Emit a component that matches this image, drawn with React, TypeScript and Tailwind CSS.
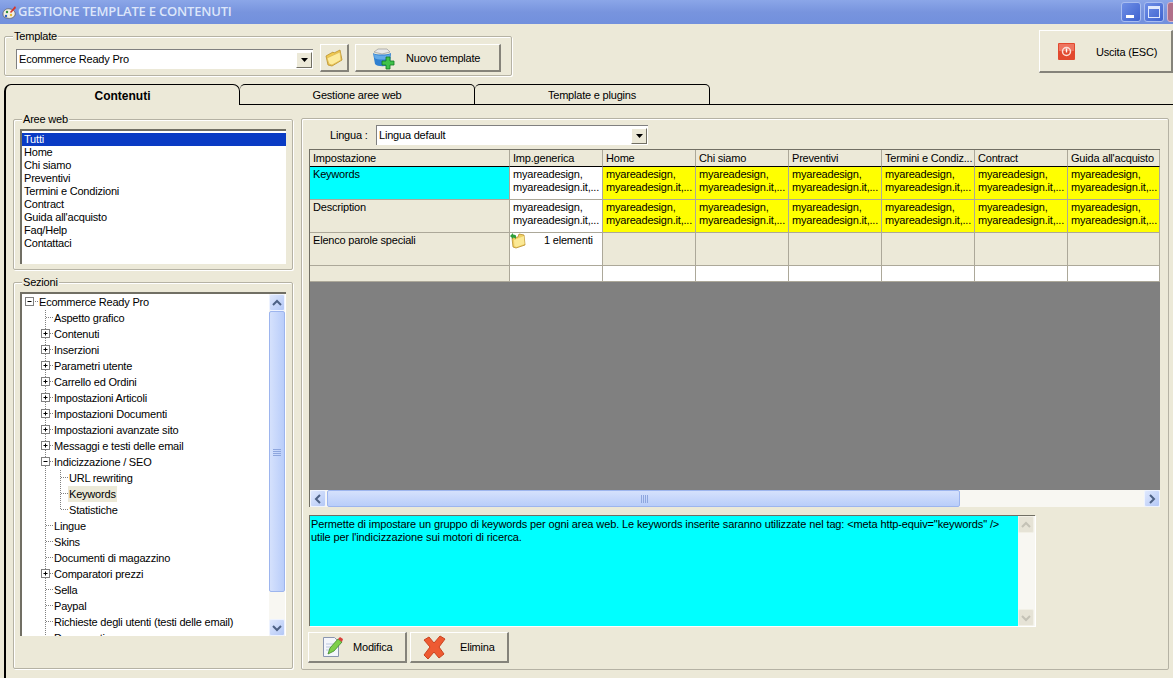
import type { ReactNode } from 'react';

const FONT = "font-['Liberation_Sans',Arial,sans-serif]";

const areas = ['Tutti', 'Home', 'Chi siamo', 'Preventivi', 'Termini e Condizioni', 'Contract', "Guida all'acquisto", 'Faq/Help', 'Contattaci'];

type Node = { label: string; level: number; kind?: 'plus' | 'minus'; last?: boolean; selected?: boolean };

const tree: Node[] = [
    { label: 'Ecommerce Ready Pro', level: 0, kind: 'minus' },
    { label: 'Aspetto grafico', level: 1 },
    { label: 'Contenuti', level: 1, kind: 'plus' },
    { label: 'Inserzioni', level: 1, kind: 'plus' },
    { label: 'Parametri utente', level: 1, kind: 'plus' },
    { label: 'Carrello ed Ordini', level: 1, kind: 'plus' },
    { label: 'Impostazioni Articoli', level: 1, kind: 'plus' },
    { label: 'Impostazioni Documenti', level: 1, kind: 'plus' },
    { label: 'Impostazioni avanzate sito', level: 1, kind: 'plus' },
    { label: 'Messaggi e testi delle email', level: 1, kind: 'plus' },
    { label: 'Indicizzazione / SEO', level: 1, kind: 'minus' },
    { label: 'URL rewriting', level: 2 },
    { label: 'Keywords', level: 2, selected: true },
    { label: 'Statistiche', level: 2, last: true },
    { label: 'Lingue', level: 1 },
    { label: 'Skins', level: 1 },
    { label: 'Documenti di magazzino', level: 1 },
    { label: 'Comparatori prezzi', level: 1, kind: 'plus' },
    { label: 'Sella', level: 1 },
    { label: 'Paypal', level: 1 },
    { label: 'Richieste degli utenti (testi delle email)', level: 1 },
    { label: 'Documenti', level: 1 },
];

const columns = ['Imp.generica', 'Home', 'Chi siamo', 'Preventivi', 'Termini e Condiz...', 'Contract', "Guida all'acquisto"];

const Expander = ({ x, kind }: { x: number; kind: 'plus' | 'minus' }) => (
    <>
        <rect x={x - 4} y="3.5" width="8" height="8" fill="#fff" stroke="#808080" />
        <path d={`M${x - 2} 7.5h4`} stroke="#000" />
        {kind === 'plus' && <path d={`M${x} 5.5v4`} stroke="#000" />}
    </>
);

const TreeRow = ({ node }: { node: Node }) => {
    const width = node.level === 0 ? 17 : node.level === 1 ? 32 : 46;
    return (
        <div className="flex h-4 items-center">
            <svg width={width} height="16" className="shrink-0">
                {node.level > 0 && <path d="M23.5 0v16" stroke="#808080" strokeDasharray="1 1" />}
                {node.level === 2 && <path d={node.last ? 'M38.5 0v8' : 'M38.5 0v16'} stroke="#808080" strokeDasharray="1 1" />}
                {node.level === 0 && <path d="M7 7.5h10" stroke="#808080" strokeDasharray="1 1" />}
                {node.level === 1 && <path d="M24 7.5h8" stroke="#808080" strokeDasharray="1 1" />}
                {node.level === 2 && <path d="M39 7.5h7" stroke="#808080" strokeDasharray="1 1" />}
                {node.kind && <Expander x={node.level === 0 ? 7.5 : 23.5} kind={node.kind} />}
            </svg>
            <span className={`whitespace-nowrap ${node.level === 2 ? 'px-px' : ''} ${node.selected ? 'bg-[#ece9d8]' : ''}`}>{node.label}</span>
        </div>
    );
};

const Group = ({ title, className, children }: { title: string; className: string; children: ReactNode }) => (
    <div className={`relative rounded-[2px] border border-[#b5b2a4] shadow-[inset_1px_1px_0_#fff,1px_1px_0_#fff] ${className}`}>
        <span className="absolute -top-[7px] left-2 bg-[#ece9d8] px-px leading-3">{title}</span>
        {children}
    </div>
);

const Button = ({ className, children }: { className: string; children: ReactNode }) => (
    <div className={`flex items-center border-t border-l border-white border-b-2 border-r-2 border-b-[#85837a] border-r-[#85837a] bg-[#ece9d8] ${className}`}>
        {children}
    </div>
);

const ComboArrow = () => (
    <div className="flex h-4 w-4 items-center justify-center border-t border-l border-white border-r border-b border-r-[#716f64] border-b-[#716f64] bg-[#ece9d8]">
        <svg width="7" height="4"><path d="M0 0h7L3.5 4z" fill="#000" /></svg>
    </div>
);

const Arrow = ({ dir, color }: { dir: 'up' | 'down' | 'left' | 'right'; color: string }) => {
    const d = { up: 'M1 6l4-4 4 4', down: 'M1 2l4 4 4-4', left: 'M6 1L2 5l4 4', right: 'M2 1l4 4-4 4' }[dir];
    const box = dir === 'up' || dir === 'down' ? '0 0 10 8' : '0 0 8 10';
    return (
        <svg width={dir === 'up' || dir === 'down' ? 10 : 8} height={dir === 'up' || dir === 'down' ? 8 : 10} viewBox={box}>
            <path d={d} fill="none" stroke={color} strokeWidth="2" />
        </svg>
    );
};

const ScrollButton = ({ dir }: { dir: 'up' | 'down' | 'left' | 'right' }) => (
    <div className="flex h-[17px] w-4 shrink-0 items-center justify-center rounded-[2px] border border-[#eef3ff] bg-gradient-to-br from-[#dfe8fd] to-[#b4c8f6]">
        <Arrow dir={dir} color="#4d6185" />
    </div>
);

const DisabledButton = ({ dir }: { dir: 'up' | 'down' }) => (
    <div className="flex h-[17px] w-4 shrink-0 items-center justify-center rounded-[2px] border border-[#f2f0e6] bg-[#e6e3d6]">
        <Arrow dir={dir} color="#c4c2b6" />
    </div>
);

const Grip = ({ vertical }: { vertical?: boolean }) => (
    <svg width="8" height="8">
        {vertical
            ? <path d="M0 1.5h8M0 3.5h8M0 5.5h8M0 7.5h8" stroke="#8ea6de" />
            : <path d="M1.5 0v8M3.5 0v8M5.5 0v8M7.5 0v8" stroke="#8ea6de" />}
    </svg>
);

const FolderIcon = () => (
    <svg width="18" height="18" viewBox="0 0 18 18">
        <path d="M1 7l7-4 1 1 6-3 2 10-10 6-4-1z" fill="#f0c94f" stroke="#b98f2c" strokeWidth=".8" />
        <path d="M2 9l13-6 1 8-9 5-3-1z" fill="#fdeb9c" stroke="#d6b04a" strokeWidth=".6" />
    </svg>
);

const NewIcon = () => (
    <svg width="24" height="24" viewBox="0 0 24 24">
        <path d="M3 6l4-3h9l3 3-8 2z" fill="#e8e8e8" stroke="#9a9a9a" strokeWidth=".7" />
        <path d="M2 7c3 2 14 2 18 0l-1 11c-2 3-13 3-15 0z" fill="#2f7fd0" />
        <path d="M3 8c3 2 13 2 16 0l-.5 4c-3 2-12 2-15 0z" fill="#63aae8" />
        <path d="M15 11h4v4h4v4h-4v4h-4v-4h-4v-4h4z" fill="#3fc24a" stroke="#137a25" strokeWidth=".8" />
    </svg>
);

const PowerIcon = () => (
    <svg width="17" height="17" viewBox="0 0 17 17">
        <rect width="17" height="17" rx="1" fill="#e2492e" />
        <rect x="1" y="1" width="15" height="7" fill="#ee7560" />
        <circle cx="8.5" cy="8.5" r="4" fill="none" stroke="#fbe0d8" strokeWidth="1.5" />
        <path d="M8.5 5.5v4" stroke="#fff" strokeWidth="1.4" />
    </svg>
);

const EditIcon = () => (
    <svg width="22" height="24" viewBox="0 0 22 24">
        <path d="M1.5 2.5h11l4 4v15h-15z" fill="#f4f6fb" stroke="#8a96b0" />
        <path d="M4 9h9M4 12h6M4 15h5" stroke="#b9c6de" />
        <path d="M6 19l2-6 8-9 4 3-8 9z" fill="#7ed04b" stroke="#3f8a2a" strokeWidth=".8" />
        <path d="M16 4l2-2 3 2-1 3z" fill="#d9403a" />
    </svg>
);

const DeleteIcon = () => (
    <svg width="24" height="24" viewBox="0 0 24 24">
        <path d="M2 5l5-3 5 6 6-7 5 3-6 8 5 7-5 4-5-6-6 7-4-4 6-8z" fill="#ee5a32" stroke="#c9431f" />
    </svg>
);

const AppIcon = () => (
    <svg width="15" height="15" viewBox="0 0 15 15">
        <path d="M1 9c0-4 4-6 7-5 3 0 6 3 5 6-1 3-5 4-8 3-3 0-4-2-4-4z" fill="#f2efe2" stroke="#555" strokeWidth=".7" />
        <path d="M8 7l5-6 1 2-5 5z" fill="#d6362b" />
        <circle cx="5" cy="7" r="1.2" fill="#2f8f3a" />
        <circle cx="9" cy="10" r="1.2" fill="#e8b92e" />
        <circle cx="4" cy="11" r="1.2" fill="#2d5fc4" />
    </svg>
);

const LinkFolderIcon = () => (
    <svg width="16" height="16" viewBox="0 0 16 16" className="shrink-0">
        <path d="M2 5l6-1 1-3 5 1 1 10-9 3-3-1z" fill="#f0cf62" stroke="#b98f2c" strokeWidth=".8" />
        <path d="M4 7l10-4 .5 8-8 3-2-1z" fill="#fbe996" />
        <path d="M3 0L0 3l3 3V4.5c2 0 3 1 3 2.5V2.5C5 2 4 1.5 3 1.5z" fill="#2f9e3a" />
    </svg>
);

const Cell = ({ bg, children, className = '' }: { bg: string; children?: ReactNode; className?: string }) => (
    <div className={`overflow-hidden border-r border-b border-[#aca899] pl-[3px] leading-[13px] ${bg} ${className}`}>{children}</div>
);

const Keywords = ({ bg }: { bg: string }) => (
    <Cell bg={bg} className="pt-px whitespace-nowrap">myareadesign,<br />myareadesign.it,...</Cell>
);

export default function App() {
    return (
        <div className={`flex h-[678px] w-[1173px] flex-col overflow-hidden bg-[#ece9d8] text-[11px] tracking-[-0.2px] text-black ${FONT}`}>
            {/* Title bar */}
            <div className="flex h-6 shrink-0 items-center bg-gradient-to-b from-[#8ba6e8] via-[#7894de] to-[#7290dd] pl-[2px]">
                <AppIcon />
                <span className="ml-[1px] font-['Open_Sans',sans-serif] text-[13px] font-semibold text-[#dce6fa]">GESTIONE TEMPLATE E CONTENUTI</span>
                <div className="ml-auto flex translate-x-[14px] gap-[3px]">
                    <div className="flex h-5 w-5 items-end rounded-[3px] border border-[#a8bdf0] bg-gradient-to-br from-[#6f8fe6] to-[#3f62cf] pb-[3px] pl-1">
                        <div className="h-[3px] w-2 bg-white" />
                    </div>
                    <div className="flex h-5 w-5 items-center justify-center rounded-[3px] border border-[#a8bdf0] bg-gradient-to-br from-[#6f8fe6] to-[#3f62cf]">
                        <div className="h-3 w-3 border border-t-[3px] border-[#dfe8fd]" />
                    </div>
                    <div className="h-5 w-5 rounded-[3px] border border-[#d8b5c8] bg-[#b0708a]" />
                </div>
            </div>

            {/* Template row */}
            <div className="flex h-[60px] shrink-0 items-start">
                <Group title="Template" className="ml-1 mt-3 flex h-10 w-[508px] items-start pl-[11px] pt-[3px]">
                    <div className="mt-[9px] flex h-5 w-[297px] items-center justify-between border-t border-l border-t-[#808080] border-l-[#808080] bg-white pl-[2px] pr-[1px]">
                        <span>Ecommerce Ready Pro</span>
                        <ComboArrow />
                    </div>
                    <Button className="ml-[7px] mt-[4px] h-[28px] w-[29px] justify-center"><FolderIcon /></Button>
                    <Button className="ml-[6px] mt-[4px] h-[28px] w-[146px] pl-[15px]">
                        <NewIcon />
                        <span className="ml-[11px] mt-[2px]">Nuovo template</span>
                    </Button>
                </Group>
                <Button className="ml-auto mt-[6px] h-[43px] w-[134px] pl-[18px]">
                    <PowerIcon />
                    <span className="ml-[21px] mt-[2px]">Uscita (ESC)</span>
                </Button>
            </div>

            {/* Tabs */}
            <div className="flex h-[21px] shrink-0 pl-1">
                <div className="flex w-[236px] items-center justify-center rounded-t-[7px] border-l-2 border-t border-r border-black pt-[2px] text-[12px] font-bold tracking-normal">Contenuti</div>
                <div className="flex w-[235px] items-center justify-center rounded-t-[5px] border-t border-r border-b border-black pt-[2px]">Gestione aree web</div>
                <div className="flex w-[235px] items-center justify-center rounded-t-[5px] border-t border-r border-b border-black pt-[2px]">Template e plugins</div>
                <div className="flex-1 border-b border-black" />
            </div>

            {/* Tab body */}
            <div className="ml-1 flex min-h-0 flex-1 border-l-2 border-black pl-[7px] pt-[14px]">
                <div className="flex w-[280px] shrink-0 flex-col">
                    <Group title="Aree web" className="h-[151px] px-[6px] pt-[9px]">
                        <div className="h-[135px] border-t-2 border-l-2 border-t-[#716f64] border-l-[#716f64] bg-white pt-[2px]">
                            {areas.map((area, i) => (
                                <div key={area} className={`h-[13px] pl-[2px] leading-[13px] ${i === 0 ? 'bg-[#0a3bc4] text-white' : ''}`}>{area}</div>
                            ))}
                        </div>
                    </Group>
                    <Group title="Sezioni" className="mt-3 h-[387px] px-[6px] pt-[9px]">
                        <div className="flex h-[344px] border-t-2 border-l-2 border-t-[#716f64] border-l-[#716f64] bg-white pr-px">
                            <div className="h-full min-w-0 flex-1 overflow-hidden">
                                {tree.map(node => <TreeRow key={node.label + node.level} node={node} />)}
                            </div>
                            <div className="flex h-full w-4 shrink-0 flex-col bg-[#f8f7f2]">
                                <ScrollButton dir="up" />
                                <div className="flex h-[281px] shrink-0 items-center justify-center rounded-[2px] border border-[#9db5ee] bg-gradient-to-r from-[#d5e1fc] to-[#b9cdfa]">
                                    <Grip vertical />
                                </div>
                                <div className="flex-1" />
                                <ScrollButton dir="down" />
                            </div>
                        </div>
                    </Group>
                </div>

                {/* Right panel */}
                <div className="-mt-px ml-2 flex h-[552px] w-[868px] shrink-0 flex-col rounded-[2px] border border-[#b5b2a4] pl-[7px] shadow-[inset_1px_1px_0_#fff]">
                    <div className="flex h-[30px] shrink-0 items-center pl-[21px] pt-[2px]">
                        <span className="w-[46px]">Lingua :</span>
                        <div className="flex h-5 w-[272px] items-center justify-between border-t border-l border-t-[#808080] border-l-[#808080] bg-white pl-[2px] pr-[1px]">
                            <span>Lingua default</span>
                            <ComboArrow />
                        </div>
                    </div>

                    <div className="flex h-[358px] w-[851px] shrink-0 flex-col border-t border-l border-t-[#716f64] border-l-[#716f64] bg-[#808080]">
                        <div className="grid shrink-0 grid-cols-[200px_93px_93px_93px_93px_93px_93px_92px] grid-rows-[17px_33px_33px_33px_16px] bg-[#ece9d8]">
                            <div className="border-r border-b border-[#aca899] border-b-black pl-[3px] pt-[2px] leading-[13px]">Impostazione</div>
                            {columns.map(col => (
                                <div key={col} className="overflow-hidden whitespace-nowrap border-r border-b border-[#aca899] border-b-black pl-[3px] pt-[2px] leading-[13px]">{col}</div>
                            ))}

                            <Cell bg="bg-[#00ffff]" className="pt-[1px]">Keywords</Cell>
                            <Keywords bg="bg-white" />
                            {columns.slice(1).map(col => <Keywords key={col} bg="bg-[#ffff00]" />)}

                            <Cell bg="bg-[#ece9d8]" className="pt-[1px]">Description</Cell>
                            <Keywords bg="bg-white" />
                            {columns.slice(1).map(col => <Keywords key={col} bg="bg-[#ffff00]" />)}

                            <Cell bg="bg-[#ece9d8]" className="pt-[1px]">Elenco parole speciali</Cell>
                            <Cell bg="bg-white" className="flex items-start !pl-0">
                                <LinkFolderIcon />
                                <span className="ml-[18px] whitespace-nowrap leading-[15px]">1 elementi</span>
                            </Cell>
                            {columns.slice(1).map(col => <Cell key={col} bg="bg-[#ece9d8]" />)}

                            <Cell bg="bg-[#ece9d8]" />
                            {columns.map(col => <Cell key={col} bg="bg-white" />)}
                        </div>
                        <div className="flex-1" />
                        <div className="flex h-[17px] shrink-0 bg-[#f8f7f2]">
                            <ScrollButton dir="left" />
                            <div className="ml-px flex w-[633px] items-center justify-center rounded-[2px] border border-[#9db5ee] bg-gradient-to-b from-[#d5e1fc] to-[#b9cdfa]">
                                <Grip />
                            </div>
                            <div className="flex-1" />
                            <ScrollButton dir="right" />
                        </div>
                    </div>

                    <div className="mt-[8px] flex h-[111px] w-[726px] shrink-0 border-t border-l border-t-[#716f64] border-l-[#716f64] shadow-[1px_1px_0_#fff]">
                        <div className="flex-1 bg-[#00ffff] pl-px pt-[2px] leading-[13px] tracking-[-0.12px]">
                            Permette di impostare un gruppo di keywords per ogni area web. Le keywords inserite saranno utilizzate nel tag: &lt;meta http-equiv="keywords" /&gt; utile per l'indicizzazione sui motori di ricerca.
                        </div>
                        <div className="flex w-[17px] shrink-0 flex-col justify-between bg-[#f8f7f2] pr-px">
                            <DisabledButton dir="up" />
                            <DisabledButton dir="down" />
                        </div>
                    </div>

                    <div className="mt-[6px] -ml-px flex gap-[3px]">
                        <Button className="h-[31px] w-[99px] pl-[13px]">
                            <EditIcon />
                            <span className="ml-[9px]">Modifica</span>
                        </Button>
                        <Button className="h-[31px] w-[99px] pl-[11px]">
                            <DeleteIcon />
                            <span className="ml-[14px]">Elimina</span>
                        </Button>
                    </div>
                </div>
            </div>
        </div>
    );
}
